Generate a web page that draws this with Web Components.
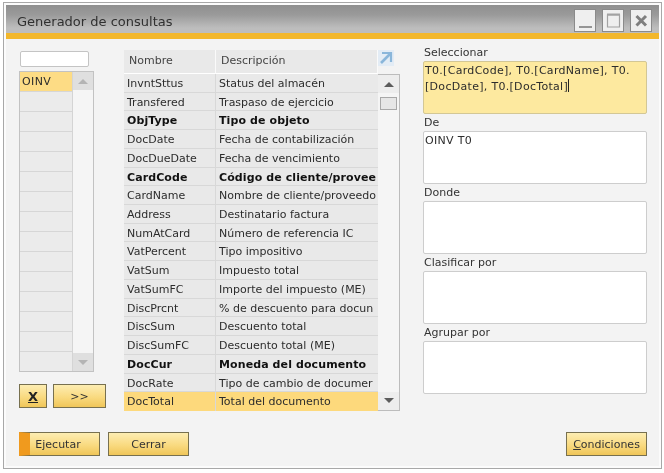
<!DOCTYPE html>
<html>
<head>
<meta charset="utf-8">
<style>
    html, body { margin: 0; height: 100%; background: #fff; }
    body { overflow: hidden; font: 11px "DejaVu Sans", sans-serif; color: #2c2c2c; }
</style>
</head>
<body>
<query-window heading="Generador de consultas">
    <table-list slot="tables">
        <list-cell selected>OINV</list-cell>
    </table-list>
    <sap-button slot="tool-x" width="28" large><b><u>X</u></b></sap-button>
    <sap-button slot="tool-add" width="53">&gt;&gt;</sap-button>

    <field-grid slot="grid">
        <field-row name="InvntSttus" desc="Status del almacén"></field-row>
        <field-row name="Transfered" desc="Traspaso de ejercicio"></field-row>
        <field-row name="ObjType" desc="Tipo de objeto" bold></field-row>
        <field-row name="DocDate" desc="Fecha de contabilización"></field-row>
        <field-row name="DocDueDate" desc="Fecha de vencimiento"></field-row>
        <field-row name="CardCode" desc="Código de cliente/provee" bold></field-row>
        <field-row name="CardName" desc="Nombre de cliente/proveedo"></field-row>
        <field-row name="Address" desc="Destinatario factura"></field-row>
        <field-row name="NumAtCard" desc="Número de referencia IC"></field-row>
        <field-row name="VatPercent" desc="Tipo impositivo"></field-row>
        <field-row name="VatSum" desc="Impuesto total"></field-row>
        <field-row name="VatSumFC" desc="Importe del impuesto (ME)"></field-row>
        <field-row name="DiscPrcnt" desc="% de descuento para docun"></field-row>
        <field-row name="DiscSum" desc="Descuento total"></field-row>
        <field-row name="DiscSumFC" desc="Descuento total (ME)"></field-row>
        <field-row name="DocCur" desc="Moneda del documento" bold></field-row>
        <field-row name="DocRate" desc="Tipo de cambio de documer"></field-row>
        <field-row name="DocTotal" desc="Total del documento" selected></field-row>
    </field-grid>

    <text-field slot="fields" label="Seleccionar" active>T0.[CardCode], T0.[CardName], T0.<br>[DocDate], T0.[DocTotal]<i style="display:inline-block;width:1px;height:13px;background:#222;vertical-align:-2px"></i></text-field>
    <text-field slot="fields" label="De">OINV T0</text-field>
    <text-field slot="fields" label="Donde"></text-field>
    <text-field slot="fields" label="Clasificar por"></text-field>
    <text-field slot="fields" label="Agrupar por"></text-field>

    <sap-button slot="run" width="81" marker>Ejecutar</sap-button>
    <sap-button slot="run" width="81">Cerrar</sap-button>
    <sap-button slot="conditions" width="81"><u>C</u>ondiciones</sap-button>
</query-window>

<script>
const windowTemplate = document.createElement("template");
windowTemplate.innerHTML = `
    <style>
        :host {
            display: flex;
            flex-direction: column;
            box-sizing: border-box;
            height: 467px;
            margin: 2px 2px 0 3px;
            padding: 2px;
            border: 1px solid #a8a8a8;
            background: #fbfbfb;
            filter: blur(.35px);
        }
        .title {
            display: flex;
            align-items: center;
            justify-content: space-between;
            box-sizing: border-box;
            height: 34px;
            padding: 3px 7px 0 11px;
            background: linear-gradient(#8f8f8f, #9a9a9a 35%, #bdbdbd 82%);
            border-bottom: 6px solid #f2b72c;
            font-size: 13px;
            color: #303030;
        }
        #heading { padding-top: 2px; }
        .title-buttons { display: flex; gap: 6px; }
        .body {
            flex: 1;
            display: flex;
            flex-direction: column;
            padding: 0 12px 10px 13px;
            background: #f3f3f3;
        }
        .main { flex: 1; display: flex; align-items: flex-start; }
        .left { width: 87px; padding-top: 12px; margin-right: 18px; }
        .search {
            box-sizing: border-box;
            width: 69px;
            height: 16px;
            margin: 0 0 4px 1px;
            background: #fff;
            border: 1px solid #c4c4c4;
            border-radius: 2px;
        }
        .tools { display: flex; gap: 6px; margin-top: 12px; }
        .center { padding-top: 11px; margin-right: 23px; }
        .right { display: flex; flex-direction: column; gap: 2px; padding-top: 7px; width: 224px; }
        .footer { display: flex; justify-content: space-between; }
        .run { display: flex; gap: 8px; }
    </style>
    <div class="title">
        <span id="heading"></span>
        <div class="title-buttons">
            <window-button kind="min"></window-button>
            <window-button kind="max"></window-button>
            <window-button kind="close"></window-button>
        </div>
    </div>
    <div class="body">
        <div class="main">
            <div class="left">
                <div class="search"></div>
                <slot name="tables"></slot>
                <div class="tools">
                    <slot name="tool-x"></slot>
                    <slot name="tool-add"></slot>
                </div>
            </div>
            <div class="center"><slot name="grid"></slot></div>
            <div class="right"><slot name="fields"></slot></div>
        </div>
        <div class="footer">
            <div class="run"><slot name="run"></slot></div>
            <slot name="conditions"></slot>
        </div>
    </div>
`;

class QueryWindow extends HTMLElement {
    constructor(){
        super();
        this.attachShadow({ mode: 'open' });
        this.shadowRoot.appendChild(windowTemplate.content.cloneNode(true));
        this.shadowRoot.querySelector('#heading').textContent = this.getAttribute('heading');
    }
}

class WindowButton extends HTMLElement {
    constructor(){
        super();
        const glyphs = {
            min: '<path d="M4 17h13" stroke="#959595" stroke-width="2"/>',
            max: '<path d="M4.5 5h12v12h-12z" fill="none" stroke="#a2a2a2" stroke-width="1.2"/><path d="M4 4.5h13" stroke="#a2a2a2" stroke-width="2"/>',
            close: '<path d="M5.5 6l9.5 9.5M15 6l-9.5 9.5" stroke="#7f7f7f" stroke-width="3"/>'
        };
        this.attachShadow({ mode: 'open' }).innerHTML = `
            <style>
                :host {
                    display: block;
                    box-sizing: border-box;
                    width: 22px;
                    height: 23px;
                    border: 1px solid #8a8a8a;
                    background: #efefef;
                }
                svg { display: block; }
            </style>
            <svg width="20" height="21" viewBox="0 0 20 21">${glyphs[this.getAttribute('kind')]}</svg>`;
    }
}

class ScrollBar extends HTMLElement {
    constructor(){
        super();
        this.attachShadow({ mode: 'open' }).innerHTML = `
            <style>
                :host {
                    display: flex;
                    flex-direction: column;
                    justify-content: space-between;
                    box-sizing: border-box;
                    width: 21px;
                    background: #f5f5f5;
                    border: 1px solid #bcbcbc;
                    border-left: 0;
                    --arrow: #5c5c5c;
                    --arrow-bg: #ededed;
                }
                :host([muted]) { --arrow: #b4b4b4; --arrow-bg: #dfdfdf; }
                .arrow {
                    height: 18px;
                    background: var(--arrow-bg);
                    display: flex;
                    align-items: center;
                    justify-content: center;
                }
                .up, .down { width: 0; height: 0; border: 5px solid transparent; }
                .up { border-bottom: 5px solid var(--arrow); border-top: 0; }
                .down { border-top: 5px solid var(--arrow); border-bottom: 0; }
                .thumb {
                    box-sizing: border-box;
                    display: none;
                    height: 13px;
                    margin: 4px 2px;
                    background: #e6e6e6;
                    border: 1px solid #a8a8a8;
                }
                :host([thumb]) .thumb { display: block; }
            </style>
            <div>
                <div class="arrow"><div class="up"></div></div>
                <div class="thumb"></div>
            </div>
            <div class="arrow"><div class="down"></div></div>`;
    }
}

class TableList extends HTMLElement {
    constructor(){
        super();
        this.attachShadow({ mode: 'open' }).innerHTML = `
            <style>
                :host {
                    display: flex;
                    box-sizing: border-box;
                    width: 75px;
                    height: 301px;
                    border: 1px solid #c2c2c2;
                }
                .cells {
                    flex: 1;
                    display: grid;
                    grid-auto-rows: 20px;
                    align-content: start;
                    overflow: hidden;
                    background: #ececec;
                    border-right: 1px solid #d4d4d4;
                }
                .blank { background: #ebebeb; border-bottom: 1px solid #d6d6d6; }
                scroll-bar { border: 0; width: 20px; }
            </style>
            <div class="cells">
                <slot></slot>
                ${'<div class="blank"></div>'.repeat(14)}
            </div>
            <scroll-bar muted></scroll-bar>`;
    }
}

class ListCell extends HTMLElement {
    constructor(){
        super();
        this.attachShadow({ mode: 'open' }).innerHTML = `
            <style>
                :host {
                    display: block;
                    box-sizing: border-box;
                    height: 20px;
                    padding: 2px 2px;
                    line-height: 15px;
                    letter-spacing: .4px;
                    background: #ebebeb;
                    border-bottom: 1px solid #d6d6d6;
                }
                :host([selected]) { background: #fddc85; }
            </style>
            <slot></slot>`;
    }
}

class FieldGrid extends HTMLElement {
    constructor(){
        super();
        this.attachShadow({ mode: 'open' }).innerHTML = `
            <style>
                :host { display: block; width: 276px; }
                .head {
                    display: flex;
                    height: 24px;
                    width: 254px;
                    line-height: 21px;
                    position: relative;
                }
                .head span {
                    box-sizing: border-box;
                    background: #e9e9e9;
                    border-right: 1px solid #fafafa;
                    border-bottom: 1px solid #fff;
                    padding-left: 5px;
                    color: #444;
                }
                .head .n { width: 92px; }
                .head .d { width: 162px; }
                .jump { position: absolute; left: 254px; top: 0; }
                .rows { display: flex; }
                .list { width: 254px; display: grid; grid-auto-rows: 18.72px; }
                scroll-bar { flex: 0 0 22px; width: 22px; }
            </style>
            <div class="head">
                <span class="n">Nombre</span><span class="d">Descripción</span>
                <svg class="jump" width="16" height="16" viewBox="0 0 16 16">
                    <rect width="16" height="16" fill="#e3ecf5"/>
                    <path d="M4 3h9v9" fill="none" stroke="#8ab6da" stroke-width="2.2"/>
                    <path d="M12.5 3.5L3 13" fill="none" stroke="#8ab6da" stroke-width="2.6"/>
                </svg>
            </div>
            <div class="rows">
                <div class="list"><slot></slot></div>
                <scroll-bar thumb></scroll-bar>
            </div>`;
    }
}

class FieldRow extends HTMLElement {
    constructor(){
        super();
        this.attachShadow({ mode: 'open' }).innerHTML = `
            <style>
                :host {
                    display: flex;
                    min-width: 0;
                    overflow: hidden;
                    white-space: nowrap;
                    line-height: 19px;
                    background: #e9e9e9;
                    box-shadow: inset 0 -1px #d8d8d8;
                }
                :host([bold]) { font-weight: bold; color: #111; letter-spacing: .1px; }
                :host([selected]) { background: #fdd97c; box-shadow: none; }
                span { display: block; overflow: hidden; box-sizing: border-box; padding-left: 3px; }
                .n { flex: 0 0 92px; border-right: 1px solid #d8d8d8; }
                .d { flex: 0 0 162px; }
            </style>
            <span class="n">${this.getAttribute('name')}</span>
            <span class="d">${this.getAttribute('desc')}</span>`;
    }
}

class TextField extends HTMLElement {
    constructor(){
        super();
        this.attachShadow({ mode: 'open' }).innerHTML = `
            <style>
                :host { display: block; }
                label { display: block; height: 15px; line-height: 14px; padding-left: 1px; color: #333; }
                .box {
                    box-sizing: border-box;
                    height: 53px;
                    padding: 1px 1px 0;
                    line-height: 15.5px;
                    letter-spacing: .3px;
                    background: #fff;
                    border: 1px solid #cdcdcd;
                    border-radius: 2px;
                    white-space: nowrap;
                    overflow: hidden;
                }
                :host([active]) .box { background: #fde99f; border-color: #d3c795; }
            </style>
            <label>${this.getAttribute('label')}</label>
            <div class="box"><slot></slot></div>`;
    }
}

class SapButton extends HTMLElement {
    constructor(){
        super();
        this.attachShadow({ mode: 'open' }).innerHTML = `
            <style>
                :host {
                    display: flex;
                    align-items: center;
                    justify-content: center;
                    box-sizing: border-box;
                    width: ${this.getAttribute('width')}px;
                    height: 24px;
                    border: 1px solid #77704f;
                    background: linear-gradient(#fdedb2, #f9da80 55%, #f0c659);
                    color: #333;
                }
                :host([marker]) { border-left: 11px solid #f09a1e; padding-right: 13px; }
                :host([large]) { font-size: 13px; color: #222; }
            </style>
            <slot></slot>`;
    }
}

window.customElements.define('window-button', WindowButton);
window.customElements.define('scroll-bar', ScrollBar);
window.customElements.define('list-cell', ListCell);
window.customElements.define('table-list', TableList);
window.customElements.define('field-row', FieldRow);
window.customElements.define('field-grid', FieldGrid);
window.customElements.define('text-field', TextField);
window.customElements.define('sap-button', SapButton);
window.customElements.define('query-window', QueryWindow);
</script>
</body>
</html>
